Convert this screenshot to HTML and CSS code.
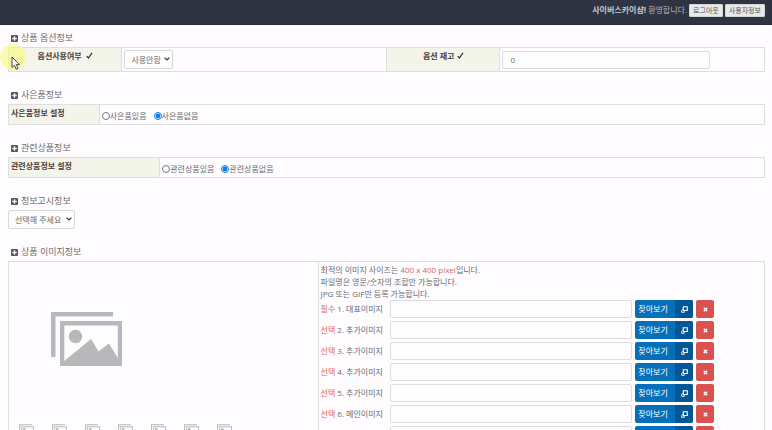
FILE: index.html
```html
<!DOCTYPE html>
<html lang="ko">
<head>
<meta charset="utf-8">
<title>상품 등록</title>
<link rel="stylesheet" href="styles.css">
</head>
<body>
<svg class="defs" aria-hidden="true">
  <symbol id="plus" viewBox="0 0 7 7"><rect width="7" height="7" rx="1" fill="#55565b"/><path d="M3.5 1.3v4.4M1.3 3.5h4.4" stroke="#fff" stroke-width="1.3"/></symbol>
  <symbol id="check" viewBox="0 0 7 7"><path d="M.8 4.1 2.4 6 6 .9" fill="none" stroke="#33302f" stroke-width="1.2"/></symbol>
  <symbol id="chevron" viewBox="0 0 6 4"><path d="M.6.6 3 3l2.400-2.400" fill="none" stroke="#333" stroke-width="1.2"/></symbol>
  <symbol id="images" viewBox="0 0 71 54"><path fill="#b7b8b9" fill-rule="evenodd" d="M0 0h62v4.500H4.500V45H0zM9 9h62v45H9zM13.300 13.500V49L40 27l7.500 12.500L58 31.500l8.800 14.500V13.500z"/><circle cx="24.500" cy="24.500" r="6.700" fill="#b7b8b9"/></symbol>
  <symbol id="browse" viewBox="0 0 7 7"><path d="M2.300.8h4v3.700h-4z" fill="none" stroke="#fff" stroke-width="1.100"/><path d="M2.300 2.800.7 4.500v1.800h2.600V4.700" fill="none" stroke="#dff0f5" stroke-width="1"/></symbol>
  <symbol id="close" viewBox="0 0 5 5"><path d="m.8.8 3.400 3.400M4.200.8.8 4.200" stroke="#fff" stroke-width="1.300"/></symbol>
</svg>

<header class="topbar">
  <span><strong>사이버스카이샵!</strong> 환영합니다.</span>
  <button type="button">로그아웃</button>
  <button type="button">사용자정보</button>
</header>

<main class="page">
  <section class="section">
    <h2><svg class="plus"><use href="#plus"/></svg>상품 옵션정보</h2>
    <table class="form-table options">
      <tr>
        <th scope="row"><label for="use-option">옵션사용여부 &nbsp;<svg class="check"><use href="#check"/></svg></label></th>
        <td><span class="select"><select id="use-option"><option>사용안함</option></select><svg><use href="#chevron"/></svg></span></td>
        <th scope="row"><label for="stock">옵션 재고 <svg class="check"><use href="#check"/></svg></label></th>
        <td><input class="field stock" id="stock" type="text" value="0"></td>
      </tr>
    </table>
  </section>

  <section class="section">
    <h2><svg class="plus"><use href="#plus"/></svg>사은품정보</h2>
    <table class="form-table gift">
      <tr>
        <th scope="row">사은품정보 설정</th>
        <td><div class="radios"><label><input type="radio" name="gift">사은품있음</label><label><input type="radio" name="gift" checked>사은품없음</label></div></td>
      </tr>
    </table>
  </section>

  <section class="section">
    <h2><svg class="plus"><use href="#plus"/></svg>관련상품정보</h2>
    <table class="form-table related">
      <tr>
        <th scope="row">관련상품정보 설정</th>
        <td><div class="radios"><label><input type="radio" name="related">관련상품있음</label><label><input type="radio" name="related" checked>관련상품없음</label></div></td>
      </tr>
    </table>
  </section>

  <section class="section">
    <h2><svg class="plus"><use href="#plus"/></svg>정보고시정보</h2>
    <span class="select notice"><select aria-label="정보고시정보"><option>선택해 주세요</option></select><svg><use href="#chevron"/></svg></span>
  </section>

  <section class="section">
    <h2><svg class="plus"><use href="#plus"/></svg>상품 이미지정보</h2>
    <div class="images">
      <div class="preview">
        <svg class="main-image"><use href="#images"/></svg>
        <div class="thumbs">
          <svg><use href="#images"/></svg><svg><use href="#images"/></svg><svg><use href="#images"/></svg><svg><use href="#images"/></svg><svg><use href="#images"/></svg><svg><use href="#images"/></svg><svg><use href="#images"/></svg>
        </div>
      </div>
      <div class="uploads">
        <p>최적의 이미지 사이즈는 <em>400 x 400 pixel</em>입니다.</p>
        <p>파일명은 영문/숫자의 조합만 가능합니다.</p>
        <p>JPG 또는 GIF만 등록 가능합니다.</p>
        <div class="upload"><label for="img1"><em>필수</em> 1. 대표이미지</label><input class="field" id="img1" type="text"><button type="button" class="browse"><span>찾아보기</span><i><svg><use href="#browse"/></svg></i></button><button type="button" class="remove" aria-label="삭제"><svg><use href="#close"/></svg></button></div>
        <div class="upload"><label for="img2"><em>선택</em> 2. 추가이미지</label><input class="field" id="img2" type="text"><button type="button" class="browse"><span>찾아보기</span><i><svg><use href="#browse"/></svg></i></button><button type="button" class="remove" aria-label="삭제"><svg><use href="#close"/></svg></button></div>
        <div class="upload"><label for="img3"><em>선택</em> 3. 추가이미지</label><input class="field" id="img3" type="text"><button type="button" class="browse"><span>찾아보기</span><i><svg><use href="#browse"/></svg></i></button><button type="button" class="remove" aria-label="삭제"><svg><use href="#close"/></svg></button></div>
        <div class="upload"><label for="img4"><em>선택</em> 4. 추가이미지</label><input class="field" id="img4" type="text"><button type="button" class="browse"><span>찾아보기</span><i><svg><use href="#browse"/></svg></i></button><button type="button" class="remove" aria-label="삭제"><svg><use href="#close"/></svg></button></div>
        <div class="upload"><label for="img5"><em>선택</em> 5. 추가이미지</label><input class="field" id="img5" type="text"><button type="button" class="browse"><span>찾아보기</span><i><svg><use href="#browse"/></svg></i></button><button type="button" class="remove" aria-label="삭제"><svg><use href="#close"/></svg></button></div>
        <div class="upload"><label for="img6"><em>선택</em> 6. 메인이미지</label><input class="field" id="img6" type="text"><button type="button" class="browse"><span>찾아보기</span><i><svg><use href="#browse"/></svg></i></button><button type="button" class="remove" aria-label="삭제"><svg><use href="#close"/></svg></button></div>
        <div class="upload"><span class="blank"></span><input class="field" aria-label="이미지 파일" type="text"><button type="button" class="browse" aria-label="파일 선택"><i></i></button><button type="button" class="remove" aria-label="삭제"></button></div>
      </div>
    </div>
  </section>
</main>

<div class="pointer" aria-hidden="true">
  <svg viewBox="0 0 9 14"><path d="M1 1v10.500l2.500-2.300 1.700 4 1.800-.8-1.700-3.800h3.200z" fill="#fff" stroke="#333" stroke-width=".9"/></svg>
</div>
</body>
</html>
```
FILE: styles.css
```css
* { box-sizing: border-box; }

body {
  margin: 0;
  height: 100vh;
  overflow: hidden;
  background: #fefcfe;
  color: #6c6c70;
  font: 8px/12px "Open Sans", "Noto Sans CJK KR", sans-serif;
}

button, input, select { font: inherit; color: inherit; margin: 0; }
em { font-style: normal; color: #d9655f; }
p { margin: 0; }
.defs { display: none; }

.topbar {
  display: flex;
  justify-content: flex-end;
  align-items: flex-start;
  gap: 2px;
  height: 25px;
  padding: 4px 7px 0;
  background: #2f3442;
  border-bottom: 1px solid #252839;
  color: #b2b3ba;
}
.topbar strong { color: #c9cad0; }
.topbar button {
  height: 13px;
  padding: 0 3px;
  border: 1px solid #d5d5d7;
  border-radius: 1px;
  background: #e9e9ea;
  color: #55555a;
  font-size: 7px;
  line-height: 11px;
}

.page { padding: 4px 7px 0 8px; }
.section { margin-bottom: 14px; }

h2 {
  display: flex;
  align-items: center;
  gap: 3px;
  height: 18px;
  margin: 0;
  padding-left: 3px;
  font-size: 9px;
  font-weight: 400;
}
.plus { width: 7px; height: 7px; }

.form-table {
  width: 100%;
  border-collapse: collapse;
  table-layout: fixed;
}
.form-table th, .form-table td {
  height: 20px;
  padding: 0 2px;
  border: 1px solid #dededf;
  text-align: left;
}
.form-table th {
  background: #f4f5ea;
  color: #4d3c3b;
  vertical-align: top;
  padding-top: 2px;
}
.options th, .options td { height: 24px; }
.options th { width: 15%; text-align: center; }
.gift th { width: 12%; }
.related th { width: 20%; }
.check { width: 7px; height: 7px; }

.field {
  height: 18px;
  padding: 0 7px;
  border: 1px solid #dddde0;
  border-radius: 2px;
  background: #fefdfe;
}
.stock { display: block; width: 80%; }

.select { position: relative; display: block; width: 49px; }
.select select {
  display: block;
  appearance: none;
  width: 100%;
  height: 19px;
  padding: 0 6px;
  border: 1px solid #d8d8db;
  border-radius: 2px;
  background: #fefdfe;
}
.select svg {
  position: absolute;
  right: 3px;
  top: 7px;
  width: 6px;
  height: 4px;
  pointer-events: none;
}
.notice { width: 67px; }

.radios { display: flex; gap: 7px; padding-top: 3px; }
.radios label { display: flex; align-items: center; }
.radios input { width: 8px; height: 8px; accent-color: #0b7bea; }

.images {
  display: grid;
  grid-template-columns: 41% 1fr;
  border: 1px solid #dededf;
}
.preview { padding: 50px 10px; border-right: 1px solid #dededf; }
.main-image { display: block; width: 71px; height: 54px; margin-left: 32px; }
.thumbs { display: flex; gap: 18px; margin-top: 58px; }
.thumbs svg { width: 15px; height: 12px; }

.uploads { padding: 2px; }
.upload { display: flex; align-items: center; gap: 3px; margin-bottom: 3px; }
.upload label, .blank { flex: 0 0 66px; white-space: nowrap; }
.upload .field { flex: 0 1 55%; min-width: 0; }
.browse, .remove {
  display: flex;
  align-items: center;
  flex: none;
  height: 18px;
  padding: 0;
  border: 0;
  border-radius: 2px;
  color: #fff;
}
.browse { width: 58px; background: #0570b9; overflow: hidden; }
.browse span { flex: 1; text-align: left; padding-left: 3px; }
.browse i {
  display: flex;
  align-items: center;
  justify-content: center;
  width: 18px;
  height: 100%;
  margin-left: auto;
  background: #045694;
}
.browse svg { width: 7px; height: 7px; }
.remove { justify-content: center; width: 18px; background: #d9524f; }
.remove svg { width: 5px; height: 5px; }

.pointer {
  position: absolute;
  left: 0;
  top: 44px;
  width: 26px;
  height: 26px;
  border-radius: 50%;
  background: rgba(250, 248, 120, .6);
}
.pointer svg { position: absolute; left: 11px; top: 12px; width: 9px; height: 14px; }
```
